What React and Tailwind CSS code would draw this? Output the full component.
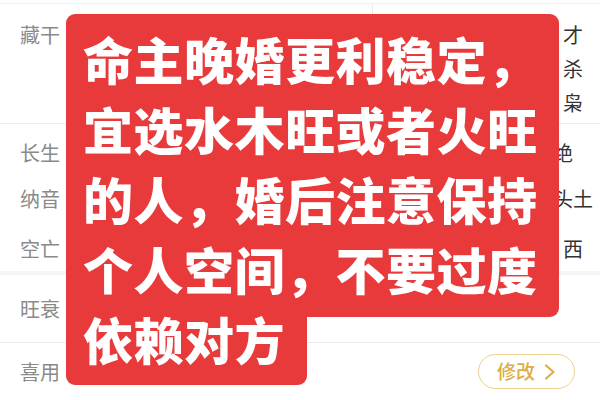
import React from "react";

const label = "text-[20px] leading-none text-[#8a8a8a]";
const value = "text-[20px] leading-none text-[#333]";

const Row = ({ name, val, className, valClass = "w-[60px] mr-[7px]" }) => (
  <div className={`flex items-center justify-between ${className}`}>
    <span className={`pl-5 ${label}`}>{name}</span>
    <span className={`text-center whitespace-nowrap ${valClass} ${value}`}>{val}</span>
  </div>
);

const App = () => {
  return (
    <div
      className="relative w-[600px] h-[400px] overflow-hidden bg-white"
      style={{ fontFamily: '"Noto Sans CJK SC", "Noto Sans", sans-serif' }}
    >
      {/* 底层表格 */}
      <div className="mt-[3px] border-t border-[#f0f0f0]">
        <div className="flex h-[120px] border-b border-[#ececec]">
          <div className="w-[372px] pt-[20px]">
            <span className={`pl-5 ${label}`}>藏干</span>
          </div>
          <div className="flex-1 flex justify-end border-l border-[#ececec]">
            <div className={`w-[20px] mr-[17px] pt-[21px] flex flex-col items-center gap-[14px] ${value}`}>
              <span>才</span>
              <span>杀</span>
              <span>枭</span>
            </div>
          </div>
        </div>
        <div className="flex flex-col pt-[19px] h-[147px]">
          <Row name="长生" val="绝" className="h-[20px]" />
          <Row name="纳音" val="城头土" className="h-[20px] mt-[26px]" />
          <Row name="空亡" val="西" valClass="w-[20px] mr-[17px]" className="h-[20px] mt-[30px]" />
        </div>
        <div className="h-[4px] bg-[#f5f5f5]" />
        <div className="flex items-center h-[68px] border-b border-[#ececec]">
          <span className={`pl-5 ${label}`}>旺衰</span>
        </div>
        <div className="flex items-center justify-between h-[58px]">
          <span className={`pl-5 ${label}`}>喜用</span>
          <button className="mr-[25px] mt-[-1px] flex items-center gap-[9px] h-[35px] w-[97px] justify-center rounded-full border-[1.5px] border-[#ecd28f] text-[19px] font-medium text-[#dcae47]">
            修改
            <svg width="12" height="16" viewBox="0 0 12 16" fill="none">
              <path d="M2 1.5 L9.5 8 L2 14.5" stroke="#dcae47" strokeWidth="2.2" strokeLinecap="round" strokeLinejoin="round" />
            </svg>
          </button>
        </div>
      </div>

      {/* 红色文字贴纸 */}
      <div className="absolute left-[66px] top-[14px] flex flex-col items-start text-white font-black text-[50px] leading-[70px] tracking-[0.5px]">
        <div className="bg-[#e8393b] rounded-[9px] pl-[17px] pr-[21px] pt-[9px] pb-[14px]">
          <div>命主晚婚更利稳定，</div>
          <div>宜选水木旺或者火旺</div>
          <div>的人，婚后注意保持</div>
          <div>个人空间，不要过度</div>
        </div>
        <div className="bg-[#e8393b] rounded-b-[9px] pl-[17px] pr-[22px] pb-[12px] -mt-[14px]">
          依赖对方
        </div>
      </div>
    </div>
  );
};

export default App;
